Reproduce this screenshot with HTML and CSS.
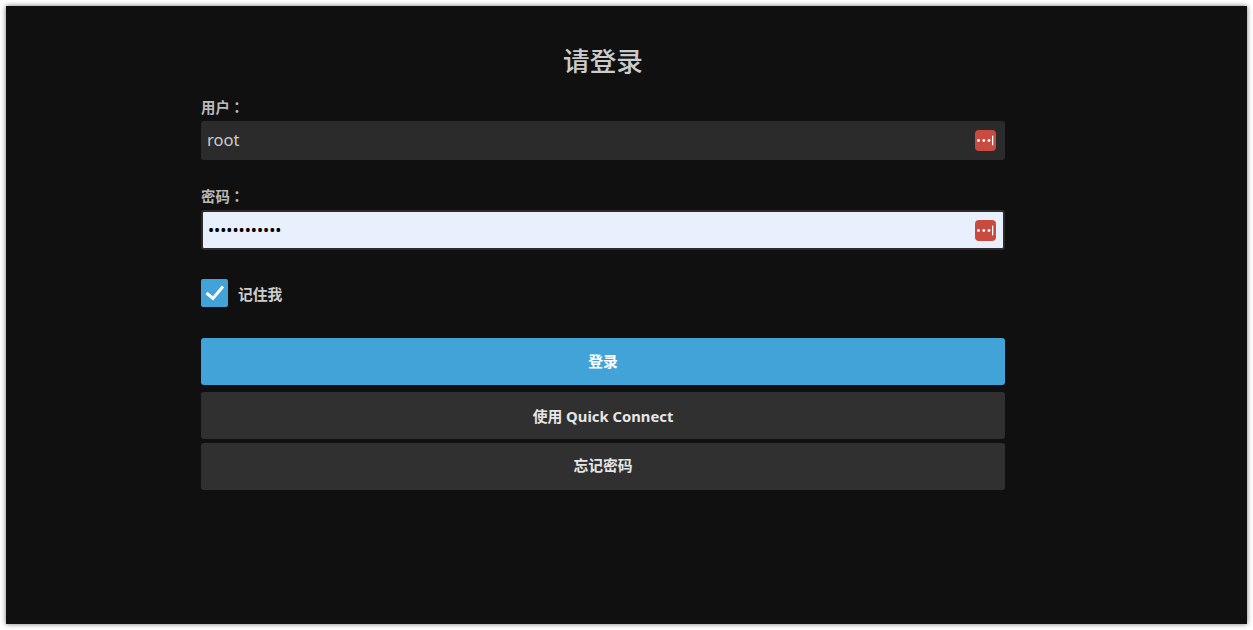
FILE: index.html
```html
<!DOCTYPE html>
<html lang="zh">
<head>
  <meta charset="UTF-8">
  <meta name="viewport" content="width=device-width, initial-scale=1.0">
  <title>请登录</title>
  <link rel="stylesheet" href="styles.css">
</head>
<body>
  <div class="window">
    <form class="login-form">
      <h1>请登录</h1>
      <div class="form-group">
        <label for="user">用户<span class="colon" lang="zh-Hant">：</span></label>
        <div class="input-wrap">
          <input type="text" id="user" value="root">
          <svg class="pass-icon" viewBox="0 0 21 21"><rect width="21" height="21" rx="4" fill="#c94b3f"/><circle cx="3.5" cy="10.5" r="1.4" fill="#fff"/><circle cx="8.8" cy="10.5" r="1.4" fill="#fff"/><circle cx="14" cy="10.5" r="1.4" fill="#fff"/><rect x="17" y="5.7" width="1.3" height="9.6" fill="#fff"/></svg>
        </div>
      </div>
      <div class="form-group">
        <label for="password">密码<span class="colon" lang="zh-Hant">：</span></label>
        <div class="input-wrap">
          <input type="password" id="password" class="autofilled" value="rootpassword">
          <svg class="pass-icon" viewBox="0 0 21 21"><rect width="21" height="21" rx="4" fill="#c94b3f"/><circle cx="3.5" cy="10.5" r="1.4" fill="#fff"/><circle cx="8.8" cy="10.5" r="1.4" fill="#fff"/><circle cx="14" cy="10.5" r="1.4" fill="#fff"/><rect x="17" y="5.7" width="1.3" height="9.6" fill="#fff"/></svg>
        </div>
      </div>
      <div class="remember">
        <span class="check">
          <svg viewBox="0 0 27 28"><path d="M5.5 14l6.5 5.5L22 7.5" fill="none" stroke="#fff" stroke-width="3"/></svg>
        </span>
        <span>记住我</span>
      </div>
      <button type="submit" class="btn btn-primary">登录</button>
      <button type="button" class="btn btn-quick">使用 Quick Connect</button>
      <button type="button" class="btn btn-forgot">忘记密码</button>
    </form>
  </div>
</body>
</html>
```

FILE: styles.css
```css
html, body {
  height: 100%;
}
body {
  margin: 0;
  padding: 6px;
  box-sizing: border-box;
  background-color: #fff;
  font-family: "Noto Sans", "Noto Sans CJK SC", sans-serif;
  overflow: hidden;
}
.window {
  height: 618px;
  background-color: #101010;
  box-shadow: 0 0 5px rgba(0, 0, 0, 0.55);
  color: #ccc;
}
.login-form {
  width: 804px;
  margin-left: 195px;
  padding-top: 37px;
}
h1 {
  margin: 0 0 19px;
  font-size: 26.6px;
  line-height: 36px;
  font-weight: 500;
  text-align: center;
  color: #ccc;
}
.form-group {
  margin-bottom: 27px;
}
label {
  display: block;
  margin-bottom: 4px;
  font-size: 14.4px;
  line-height: 18px;
  font-weight: 700;
  color: #bbb;
}
.colon {
  font-family: "Noto Sans CJK TC", sans-serif;
}
.input-wrap {
  position: relative;
}
input {
  display: block;
  width: 100%;
  height: 39px;
  padding: 0 6px 2px;
  font-family: inherit;
  font-size: 16.5px;
  color: #ccc;
  background: #2b2b2b;
  border: none;
  border-radius: 3px;
  box-sizing: border-box;
  outline: none;
}
.autofilled {
  height: 40px;
  padding: 0 5px;
  font-size: 16.3px;
  color: #000;
  background: #e8f0fe;
  border: 2px solid #2b2b2b;
}
.pass-icon {
  position: absolute;
  top: 9px;
  right: 9px;
  width: 21px;
  height: 21px;
}
.autofilled + .pass-icon {
  top: 10px;
}
.remember {
  display: flex;
  align-items: center;
  gap: 10px;
  margin: 29px 0 31px;
  font-size: 14.8px;
  font-weight: 700;
  color: #ccc;
}
.check {
  display: block;
  width: 27px;
  height: 28px;
  background: #42a3d9;
  border-radius: 2px;
}
.check svg {
  display: block;
  width: 27px;
  height: 28px;
}
.btn {
  display: block;
  width: 100%;
  height: 47px;
  padding: 0 0 2px;
  font-family: inherit;
  font-size: 14.8px;
  font-weight: 700;
  color: #e6e6e6;
  background: #303030;
  border: none;
  border-radius: 3px;
  cursor: pointer;
}
.btn-primary {
  margin-bottom: 7px;
  color: #fff;
  background: #42a3d9;
}
.btn-quick {
  margin-bottom: 4px;
  padding-bottom: 0;
}
.btn-forgot {
  padding-bottom: 4px;
}
```
